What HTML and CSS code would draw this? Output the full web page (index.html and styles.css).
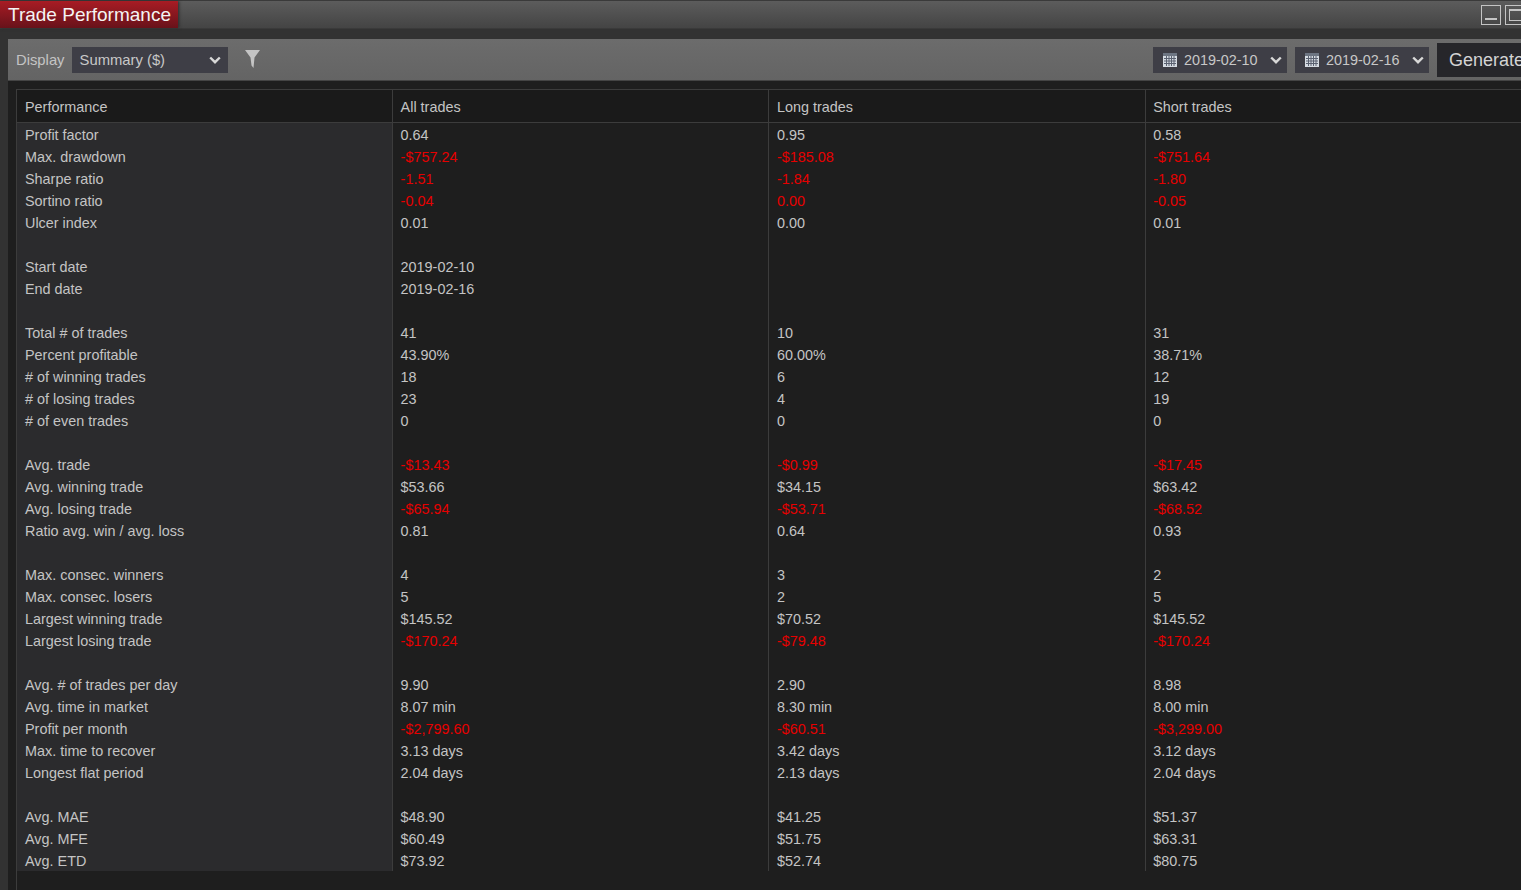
FILE: index.html
```html
<!DOCTYPE html>
<html lang="en">
<head>
  <meta charset="UTF-8" />
  <title>Trade Performance</title>
  <link rel="stylesheet" href="styles.css">
</head>
<body>
  <!-- Title bar -->
  <div class="titlebar">
    <div class="title">Trade Performance</div>
    <div class="win-buttons">
      <span class="win-btn"><i class="win-min"></i></span>
      <span class="win-btn"><i class="win-max"></i></span>
    </div>
  </div>

  <div class="panel">
    <!-- Toolbar -->
    <div class="toolbar">
      <span class="toolbar-label">Display</span>
      <div class="select select-display">
        <span class="select-text">Summary ($)</span>
        <svg class="chevron" viewBox="0 0 12 8"><path d="M1.2 1.500L6 6.200l4.800-4.700" /></svg>
      </div>
      <svg class="filter" viewBox="0 0 15 18"><path d="M0 0h15L9.500 7.500 8.500 18 6.500 15.500 5.500 7.500z" /></svg>
      <div class="spacer"></div>
      <div class="select select-date">
        <svg class="cal" viewBox="0 0 14 14">
          <rect width="14" height="14" fill="#d5dbe2" />
          <rect width="14" height="3" fill="#6d7582" />
          <path d="M1 5.500h12M1 8h12M1 10.500h12M3.500 3v10M6 3v10M8.500 3v10M11 3v10" stroke="#5a6170" stroke-width="1" />
        </svg>
        <span class="select-text">2019-02-10</span>
        <svg class="chevron" viewBox="0 0 12 8"><path d="M1.2 1.500L6 6.200l4.800-4.700" /></svg>
      </div>
      <div class="select select-date">
        <svg class="cal" viewBox="0 0 14 14">
          <rect width="14" height="14" fill="#d5dbe2" />
          <rect width="14" height="3" fill="#6d7582" />
          <path d="M1 5.500h12M1 8h12M1 10.500h12M3.500 3v10M6 3v10M8.500 3v10M11 3v10" stroke="#5a6170" stroke-width="1" />
        </svg>
        <span class="select-text">2019-02-16</span>
        <svg class="chevron" viewBox="0 0 12 8"><path d="M1.2 1.500L6 6.200l4.800-4.700" /></svg>
      </div>
      <div class="generate">Generate</div>
    </div>

    <!-- Performance table -->
    <div class="table-wrap">
    <table class="perf">
      <thead>
        <tr><th>Performance</th><th>All trades</th><th>Long trades</th><th>Short trades</th></tr>
      </thead>
      <tbody>
        <tr class="first"><td>Profit factor</td><td>0.64</td><td>0.95</td><td>0.58</td></tr>
        <tr><td>Max. drawdown</td><td class="neg">-$757.24</td><td class="neg">-$185.08</td><td class="neg">-$751.64</td></tr>
        <tr><td>Sharpe ratio</td><td class="neg">-1.51</td><td class="neg">-1.84</td><td class="neg">-1.80</td></tr>
        <tr><td>Sortino ratio</td><td class="neg">-0.04</td><td class="neg">0.00</td><td class="neg">-0.05</td></tr>
        <tr><td>Ulcer index</td><td>0.01</td><td>0.00</td><td>0.01</td></tr>
        <tr><td></td><td></td><td></td><td></td></tr>
        <tr><td>Start date</td><td>2019-02-10</td><td></td><td></td></tr>
        <tr><td>End date</td><td>2019-02-16</td><td></td><td></td></tr>
        <tr><td></td><td></td><td></td><td></td></tr>
        <tr><td>Total # of trades</td><td>41</td><td>10</td><td>31</td></tr>
        <tr><td>Percent profitable</td><td>43.90%</td><td>60.00%</td><td>38.71%</td></tr>
        <tr><td># of winning trades</td><td>18</td><td>6</td><td>12</td></tr>
        <tr><td># of losing trades</td><td>23</td><td>4</td><td>19</td></tr>
        <tr><td># of even trades</td><td>0</td><td>0</td><td>0</td></tr>
        <tr><td></td><td></td><td></td><td></td></tr>
        <tr><td>Avg. trade</td><td class="neg">-$13.43</td><td class="neg">-$0.99</td><td class="neg">-$17.45</td></tr>
        <tr><td>Avg. winning trade</td><td>$53.66</td><td>$34.15</td><td>$63.42</td></tr>
        <tr><td>Avg. losing trade</td><td class="neg">-$65.94</td><td class="neg">-$53.71</td><td class="neg">-$68.52</td></tr>
        <tr><td>Ratio avg. win / avg. loss</td><td>0.81</td><td>0.64</td><td>0.93</td></tr>
        <tr><td></td><td></td><td></td><td></td></tr>
        <tr><td>Max. consec. winners</td><td>4</td><td>3</td><td>2</td></tr>
        <tr><td>Max. consec. losers</td><td>5</td><td>2</td><td>5</td></tr>
        <tr><td>Largest winning trade</td><td>$145.52</td><td>$70.52</td><td>$145.52</td></tr>
        <tr><td>Largest losing trade</td><td class="neg">-$170.24</td><td class="neg">-$79.48</td><td class="neg">-$170.24</td></tr>
        <tr><td></td><td></td><td></td><td></td></tr>
        <tr><td>Avg. # of trades per day</td><td>9.90</td><td>2.90</td><td>8.98</td></tr>
        <tr><td>Avg. time in market</td><td>8.07 min</td><td>8.30 min</td><td>8.00 min</td></tr>
        <tr><td>Profit per month</td><td class="neg">-$2,799.60</td><td class="neg">-$60.51</td><td class="neg">-$3,299.00</td></tr>
        <tr><td>Max. time to recover</td><td>3.13 days</td><td>3.42 days</td><td>3.12 days</td></tr>
        <tr><td>Longest flat period</td><td>2.04 days</td><td>2.13 days</td><td>2.04 days</td></tr>
        <tr><td></td><td></td><td></td><td></td></tr>
        <tr><td>Avg. MAE</td><td>$48.90</td><td>$41.25</td><td>$51.37</td></tr>
        <tr><td>Avg. MFE</td><td>$60.49</td><td>$51.75</td><td>$63.31</td></tr>
        <tr class="last"><td>Avg. ETD</td><td>$73.92</td><td>$52.74</td><td>$80.75</td></tr>
      </tbody>
    </table>
    </div>
  </div>
</body>
</html>
```

FILE: styles.css
```css
html, body {
  height: 100%;
  overflow: hidden;
}
body {
  margin: 0;
  background: #323232;
  color: #c4c4c4;
  font-family: "Liberation Sans", Arial, sans-serif;
  font-size: 14.4px;
  width: 1521px;
  height: 890px;
}

/* Title bar */
.titlebar {
  height: 29px;
  box-sizing: border-box;
  border-top: 1px solid #3a3a3a;
  border-bottom: 1px solid #3a3a3a;
  background: linear-gradient(#5c5c5c, #444444);
  display: flex;
  justify-content: space-between;
}
.title {
  flex: none;
  width: 178px;
  height: 27px;
  box-sizing: border-box;
  padding-left: 8px;
  background: linear-gradient(#a81c24, #68121a);
  color: #f4f4f4;
  font-size: 19px;
  line-height: 27px;
  white-space: nowrap;
  box-shadow: 1px 0 3px #2a2a2a;
}
.win-buttons {
  flex: none;
  display: flex;
  gap: 4px;
  padding-top: 4px;
  width: 40px;
  overflow: hidden;
}
.win-btn {
  flex: none;
  width: 20px;
  height: 20px;
  border: 1px solid #c4c4c4;
  box-sizing: border-box;
  display: block;
}
.win-min {
  display: block;
  width: 12px;
  height: 2px;
  margin: 12px 0 0 3px;
  background: #c4c4c4;
}
.win-max {
  display: block;
  width: 14px;
  height: 12px;
  margin: 3px 0 0 3px;
  border: 1px solid #c4c4c4;
  border-top-width: 2px;
  box-sizing: border-box;
}

/* Panel */
.panel {
  margin: 10px 0 0 8px;
  height: 851px;
  background: #1e1e1e;
  display: flex;
  flex-direction: column;
}
.toolbar {
  flex: none;
  height: 42px;
  box-sizing: border-box;
  border-bottom: 1px solid #444;
  background: linear-gradient(#6c6c6c, #646464);
  display: flex;
  align-items: center;
  padding-left: 8px;
}
.toolbar-label {
  color: #c4c4c4;
  font-size: 14.8px;
  margin-right: 7px;
}
.select {
  flex: none;
  height: 26px;
  background: #3e3e46;
  color: #c8c8c8;
  display: flex;
  align-items: center;
  box-sizing: border-box;
  white-space: nowrap;
}
.select-text {
  padding-top: 1px;
}
.select-display {
  width: 156px;
  padding: 0 7px 0 8px;
  justify-content: space-between;
  font-size: 14.8px;
}
.select-date {
  width: 134px;
  padding-left: 10px;
  margin-right: 8px;
}
.cal {
  flex: none;
  width: 14px;
  height: 14px;
  margin-right: 7px;
}
.select-date .chevron {
  margin-left: 12px;
}
.chevron {
  flex: none;
  width: 12px;
  height: 8px;
  fill: none;
  stroke: #d8d8d8;
  stroke-width: 2.4;
}
.filter {
  flex: none;
  width: 15px;
  height: 18px;
  margin: -2px 0 0 17px;
  fill: #c4c4c4;
}
.spacer {
  flex: 1;
}
.generate {
  flex: none;
  width: 84px;
  height: 34px;
  padding-left: 12px;
  box-sizing: border-box;
  background: #26262a;
  color: #d4d4d4;
  font-size: 18px;
  line-height: 34px;
  overflow: hidden;
  white-space: nowrap;
}

/* Table */
.table-wrap {
  flex: 1;
  margin: 8px 0 0 8px;
  border-left: 1px solid #3c3c3c;
}
.perf {
  width: 1504px;
  table-layout: fixed;
  border-collapse: separate;
  border-spacing: 0;
}
.perf th, .perf td {
  padding: 0 0 0 7.6px;
  text-align: left;
  font-weight: normal;
  border-left: 1px solid #3c3c3c;
  white-space: nowrap;
  box-sizing: border-box;
}
.perf th:first-child, .perf td:first-child {
  border-left: none;
  padding-left: 8px;
  width: 375px;
}
.perf th {
  height: 34px;
  padding-top: 2px;
  background: #1a1a1a;
  border-top: 1px solid #3c3c3c;
  border-bottom: 1px solid #3c3c3c;
}
.perf td {
  height: 22px;
  line-height: 20px;
  padding-top: 1px;
  padding-bottom: 1px;
}
.perf td:first-child {
  background: #2b2b2d;
}
.perf .first td {
  height: 23px;
  padding-top: 2px;
  padding-bottom: 1px;
}
.perf .last td {
  height: 21px;
  padding-bottom: 0;
}
.neg {
  color: #e60000;
}
```
